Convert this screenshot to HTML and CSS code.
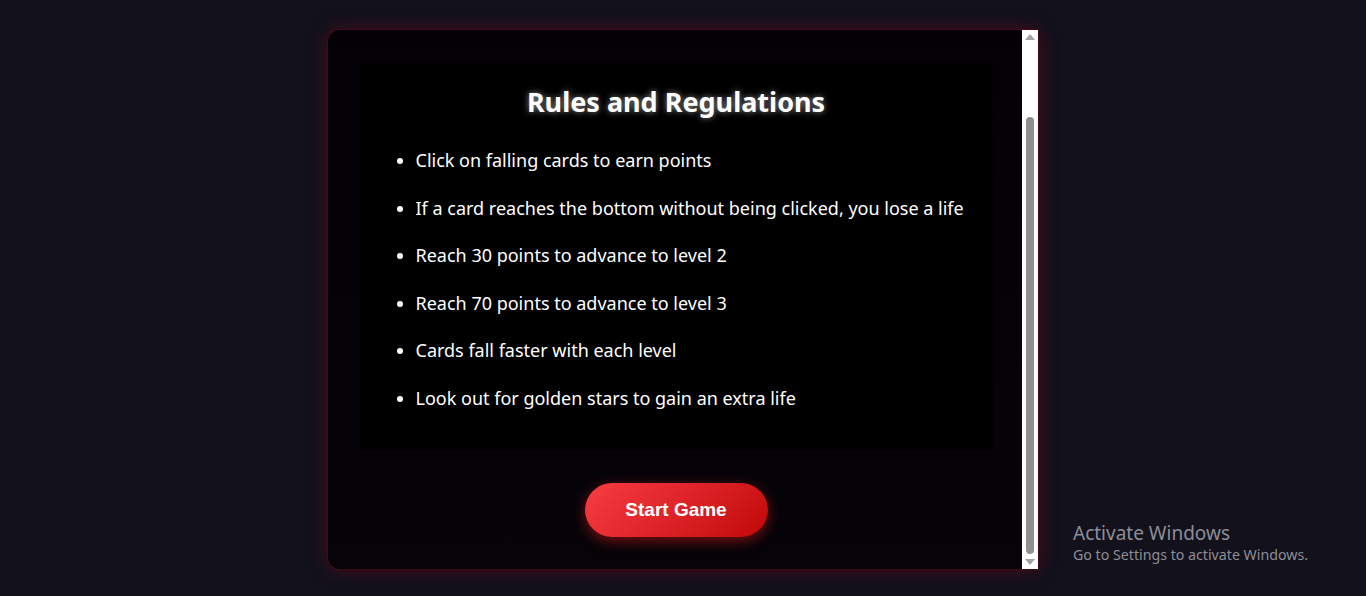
FILE: index.html
```html
<!DOCTYPE html>
<html lang="en">
<head>
<meta charset="utf-8">
<title>Rules and Regulations</title>
<link rel="stylesheet" href="styles.css">
</head>
<body>
<div class="stage">
  <div class="modal">
    <div class="modal-content">
      <div class="rules">
        <h2 class="rules-title">Rules and Regulations</h2>
        <ul class="rules-list">
          <li>Click on falling cards to earn points</li>
          <li>If a card reaches the bottom without being clicked, you lose a life</li>
          <li>Reach 30 points to advance to level 2</li>
          <li>Reach 70 points to advance to level 3</li>
          <li>Cards fall faster with each level</li>
          <li>Look out for golden stars to gain an extra life</li>
        </ul>
      </div>
      <button class="start-btn">Start Game</button>
    </div>
    <div class="scrollbar">
      <div class="arrow up"></div>
      <div class="track"><div class="thumb"></div></div>
      <div class="arrow down"></div>
    </div>
  </div>
</div>
<div class="activate">
  <div class="activate-title">Activate Windows</div>
  <div class="activate-sub">Go to Settings to activate Windows.</div>
</div>
</body>
</html>
```
FILE: styles.css
```css
html, body {
  margin: 0;
  padding: 0;
  height: 100%;
}
body {
  background: #12111c;
  font-family: "Noto Sans", "Open Sans", sans-serif;
  overflow: hidden;
}
.stage {
  display: flex;
  justify-content: center;
  padding-top: 30px;
  padding-right: 1px;
}
.modal {
  width: 710px;
  height: 539px;
  display: flex;
  background: linear-gradient(180deg, #030105 0%, #060409 100%);
  border-radius: 12px 0 0 12px;
  box-shadow: 0 0 20px rgba(170, 0, 20, 0.38), 0 0 2px rgba(150, 0, 20, 0.7);
  overflow: hidden;
}
.modal-content {
  flex: 1;
  display: flex;
  flex-direction: column;
  align-items: center;
  padding: 32px 29px 0 32px;
}
.rules {
  align-self: stretch;
  background: #000000;
  height: 388px;
  box-sizing: border-box;
  padding: 22px 0 0 0;
  border-radius: 4px;
}
.rules-title {
  margin: 0;
  text-align: center;
  color: #ffffff;
  font-size: 27px;
  font-weight: 700;
  line-height: 36px;
  text-shadow: 0 0 6px rgba(255, 255, 255, 0.55);
}
.rules-list {
  margin: 28px 0 0 0;
  padding: 0 0 0 56px;
  color: #ffffff;
  font-size: 18px;
  line-height: 24px;
}
.rules-list li {
  margin-bottom: 23.5px;
}
.start-btn {
  margin-top: 33px;
  width: 183px;
  height: 54px;
  border: none;
  border-radius: 27px;
  background: linear-gradient(135deg, #f83d42 0%, #e0262b 45%, #c00808 100%);
  color: #ffffff;
  font-family: "Liberation Sans", Arial, sans-serif;
  font-weight: 700;
  font-size: 19px;
  box-shadow: 0 4px 14px rgba(255, 30, 30, 0.45);
  cursor: pointer;
}
.scrollbar {
  width: 16px;
  background: #ffffff;
  display: flex;
  flex-direction: column;
  align-items: center;
}
.arrow {
  width: 0;
  height: 0;
  border-left: 5px solid transparent;
  border-right: 5px solid transparent;
}
.arrow.up {
  margin-top: 4px;
  border-bottom: 6px solid #a3a3a3;
}
.arrow.down {
  margin-bottom: 4px;
  border-top: 6px solid #a3a3a3;
}
.track {
  flex: 1;
  width: 100%;
  display: flex;
  flex-direction: column;
  justify-content: flex-end;
  align-items: center;
  padding: 0 0 5px 0;
}
.thumb {
  width: 8px;
  height: 437px;
  background: #8f8f8f;
  border-radius: 4px;
}
.activate {
  position: absolute;
  left: 1073px;
  top: 521px;
  color: #8e8d96;
  font-family: "Noto Sans", "Open Sans", sans-serif;
}
.activate-title {
  font-size: 19px;
  line-height: 24px;
}
.activate-sub {
  font-size: 14.2px;
  line-height: 20px;
}
```
